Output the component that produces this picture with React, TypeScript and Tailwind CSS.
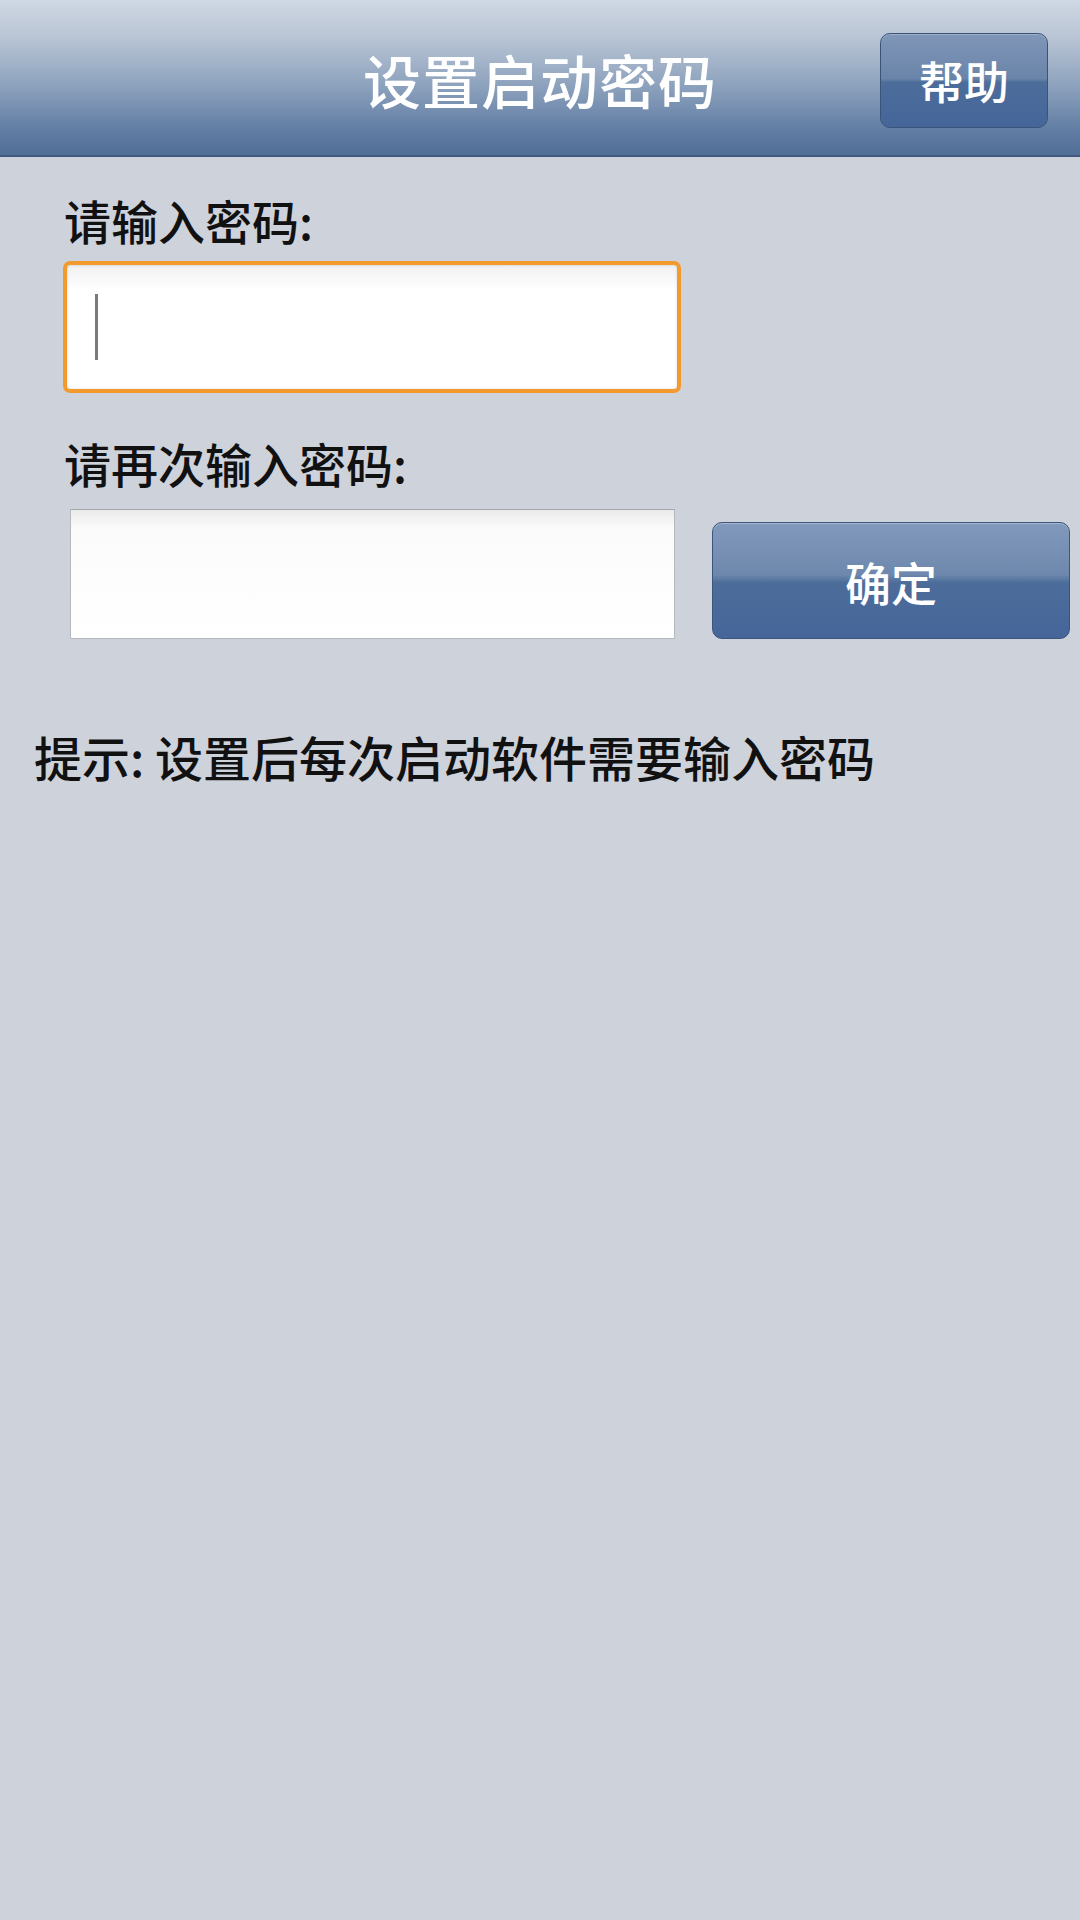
import React from "react";

const font = { fontFamily: '"Noto Sans CJK SC", "Noto Sans", sans-serif' };

export default function App() {
  return (
    <div className="w-[1080px] h-[1920px] bg-[#cdd2db] flex flex-col" style={font}>
      <header className="h-[157px] grid grid-cols-[1fr_auto_1fr] items-center border-b-2 border-[#41597c] bg-[linear-gradient(to_bottom,#cfd8e4_0%,#b8c4d4_25%,#8da2bd_55%,#607ca3_85%,#516e97_100%)]">
        <div />
        <h1 className="text-white text-[58px] leading-none font-medium tracking-[1px] mt-[2px]">设置启动密码</h1>
        <div className="flex justify-end pr-[32px]">
          <button className="mt-[6px] w-[168px] h-[95px] rounded-[10px] border border-[#3a5479] text-white text-[45px] font-medium leading-none shadow-[inset_0_1px_0_rgba(255,255,255,0.25)] bg-[linear-gradient(to_bottom,#7f96b7_0%,#6a84a9_48%,#4c6c9a_52%,#46669a_100%)]">
            帮助
          </button>
        </div>
      </header>

      <main className="flex flex-col">
        <label className="ml-[64px] mt-[40px] text-[47px] leading-[46px] font-medium text-[#111]">请输入密码:</label>
        <div className="ml-[63px] mt-[18px] w-[618px] h-[132px] rounded-[7px] border-[4px] border-[#f29a2e] bg-[linear-gradient(to_bottom,#f0f0f0,#ffffff_20%,#ffffff)] shadow-[inset_0_0_3px_rgba(0,0,0,0.15)] flex items-center pl-[28px]">
          <div className="w-[3px] h-[66px] bg-[#7b7b7b]" />
        </div>

        <label className="ml-[64px] mt-[47px] text-[47px] leading-[46px] font-medium text-[#111]">请再次输入密码:</label>
        <div className="flex items-end mt-[23px]">
          <div className="ml-[70px] w-[605px] h-[130px] border border-[#b5b9bf] border-t-[#a3a8af] bg-[linear-gradient(to_bottom,#ebebeb,#fbfbfb_15%,#ffffff)]" />
          <button className="ml-[37px] w-[358px] h-[117px] rounded-[10px] border border-[#3c567b] text-white text-[46px] font-medium leading-none bg-[linear-gradient(to_bottom,#8199bb_0%,#6e88ad_45%,#4c6c9a_52%,#46669a_100%)] shadow-[inset_0_1px_0_rgba(255,255,255,0.3)]">
            确定
          </button>
        </div>

        <p className="ml-[34px] mt-[93px] text-[48px] leading-[48px] font-medium text-[#111]">提示: 设置后每次启动软件需要输入密码</p>
      </main>
    </div>
  );
}
